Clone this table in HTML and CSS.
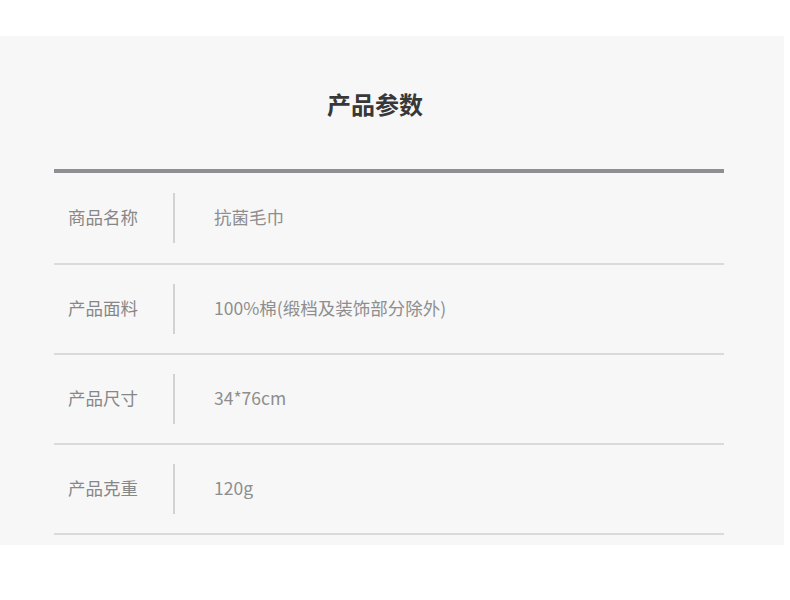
FILE: index.html
```html
<!DOCTYPE html>
<html lang="zh">
<head>
<meta charset="utf-8">
<link rel="stylesheet" href="styles.css">
</head>
<body>
<div class="page">
  <section class="panel">
    <h1 class="title">产品参数</h1>
    <div class="table">
      <div class="row row-first"><div class="label">商品名称</div><div class="divider"></div><div class="value">抗菌毛巾</div></div>
      <div class="row"><div class="label">产品面料</div><div class="divider"></div><div class="value">100%棉(缎档及装饰部分除外)</div></div>
      <div class="row"><div class="label">产品尺寸</div><div class="divider"></div><div class="value">34*76cm</div></div>
      <div class="row"><div class="label">产品克重</div><div class="divider"></div><div class="value">120g</div></div>
    </div>
  </section>
</div>
</body>
</html>
```
FILE: styles.css
```css
html, body {
  margin: 0;
  padding: 0;
  background: #ffffff;
}
body {
  font-family: "Noto Sans CJK SC", "Noto Sans", sans-serif;
}
.page {
  padding-top: 36px;
  height: 564px;
}
.panel {
  width: 784px;
  height: 509px;
  background: #f7f7f7;
  box-sizing: border-box;
  padding-top: 51px;
}
.title {
  margin: 0 0 48px 0;
  width: 750px;
  text-align: center;
  font-size: 24px;
  line-height: 34px;
  font-weight: 700;
  color: #383838;
}
.table {
  margin-left: 54px;
  width: 670px;
  border-top: 4px solid #8e8e93;
}
.row {
  display: flex;
  align-items: center;
  height: 88px;
  border-bottom: 2px solid #dadada;
}
.row-first {
  height: 90px;
}
.label {
  width: 105px;
  padding-left: 14px;
  padding-bottom: 4px;
  font-size: 17.5px;
  color: #878787;
}
.divider {
  width: 2px;
  height: 50px;
  background: #d2d2d2;
}
.value {
  padding-left: 39px;
  padding-bottom: 4px;
  font-size: 17.5px;
  color: #8e8e8e;
}
```
